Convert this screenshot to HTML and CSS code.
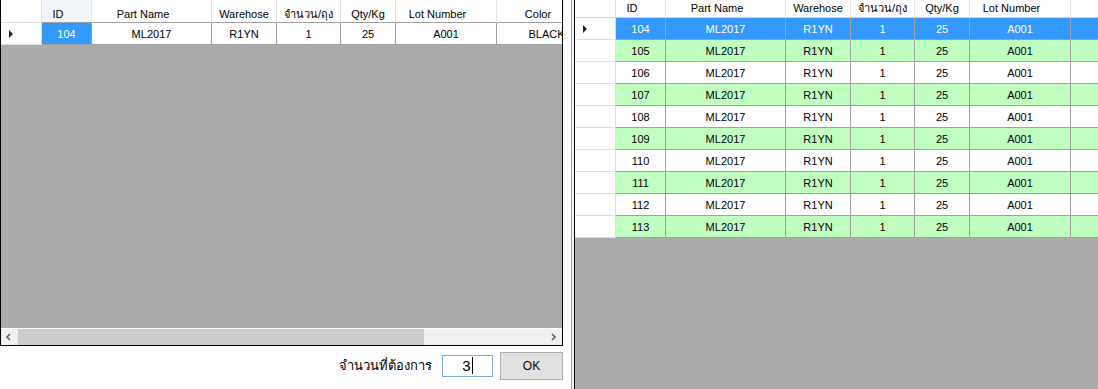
FILE: index.html
```html
<!DOCTYPE html>
<html>
<head>
    <title>Stock Picker</title>
    <link rel="stylesheet" href="styles.css">
</head>
<body>
    <div class="screen">
        <div class="left-pane">
            <div class="grid grid-left">
                <div class="grid-body">
                    <div class="row head">
                        <div class="rh"></div>
                        <div class="c-id sg hover">ID</div>
                        <div class="c-part sg">Part Name</div>
                        <div class="c-wh">Warehose</div>
                        <div class="c-qty">จำนวน/ถุง</div>
                        <div class="c-kg">Qty/Kg</div>
                        <div class="c-lot sg">Lot Number</div>
                        <div class="c-color sg">Color</div>
                    </div>
                    <div class="row">
                        <div class="rh"><span class="arrow"></span></div>
                        <div class="c-id sel">104</div>
                        <div class="c-part">ML2017</div>
                        <div class="c-wh">R1YN</div>
                        <div class="c-qty">1</div>
                        <div class="c-kg">25</div>
                        <div class="c-lot">A001</div>
                        <div class="c-color">BLACK</div>
                    </div>
                </div>
                <div class="hscroll">
                    <div class="sb-btn">
                        <svg width="17" height="16" viewBox="0 0 17 16"><polyline points="9,5 6,8 9,11" fill="none" stroke="#606060" stroke-width="1.6"/></svg>
                    </div>
                    <div class="sb-track"><div class="sb-thumb"></div></div>
                    <div class="sb-btn">
                        <svg width="17" height="16" viewBox="0 0 17 16"><polyline points="7,5 10,8 7,11" fill="none" stroke="#606060" stroke-width="1.6"/></svg>
                    </div>
                </div>
            </div>
            <div class="actions">
                <span class="label">จำนวนที่ต้องการ</span>
                <div class="textbox"><span class="value">3</span></div>
                <button class="btn">OK</button>
            </div>
        </div>
        <div class="splitter"></div>
        <div class="right-pane">
            <div class="grid grid-right">
                <div class="grid-body">
                    <div class="row head cut">
                        <div class="rh"></div>
                        <div class="c-id sg">ID</div>
                        <div class="c-part sg">Part Name</div>
                        <div class="c-wh">Warehose</div>
                        <div class="c-qty">จำนวน/ถุง</div>
                        <div class="c-kg">Qty/Kg</div>
                        <div class="c-lot sg">Lot Number</div>
                        <div class="c-rest"></div>
                    </div>
                    <div class="row sel">
                        <div class="rh"><span class="arrow"></span></div>
                        <div class="c-id">104</div><div class="c-part">ML2017</div><div class="c-wh">R1YN</div><div class="c-qty">1</div><div class="c-kg">25</div><div class="c-lot">A001</div><div class="c-rest"></div>
                    </div>
                    <div class="row alt">
                        <div class="rh"></div>
                        <div class="c-id">105</div><div class="c-part">ML2017</div><div class="c-wh">R1YN</div><div class="c-qty">1</div><div class="c-kg">25</div><div class="c-lot">A001</div><div class="c-rest"></div>
                    </div>
                    <div class="row">
                        <div class="rh"></div>
                        <div class="c-id">106</div><div class="c-part">ML2017</div><div class="c-wh">R1YN</div><div class="c-qty">1</div><div class="c-kg">25</div><div class="c-lot">A001</div><div class="c-rest"></div>
                    </div>
                    <div class="row alt">
                        <div class="rh"></div>
                        <div class="c-id">107</div><div class="c-part">ML2017</div><div class="c-wh">R1YN</div><div class="c-qty">1</div><div class="c-kg">25</div><div class="c-lot">A001</div><div class="c-rest"></div>
                    </div>
                    <div class="row">
                        <div class="rh"></div>
                        <div class="c-id">108</div><div class="c-part">ML2017</div><div class="c-wh">R1YN</div><div class="c-qty">1</div><div class="c-kg">25</div><div class="c-lot">A001</div><div class="c-rest"></div>
                    </div>
                    <div class="row alt">
                        <div class="rh"></div>
                        <div class="c-id">109</div><div class="c-part">ML2017</div><div class="c-wh">R1YN</div><div class="c-qty">1</div><div class="c-kg">25</div><div class="c-lot">A001</div><div class="c-rest"></div>
                    </div>
                    <div class="row">
                        <div class="rh"></div>
                        <div class="c-id">110</div><div class="c-part">ML2017</div><div class="c-wh">R1YN</div><div class="c-qty">1</div><div class="c-kg">25</div><div class="c-lot">A001</div><div class="c-rest"></div>
                    </div>
                    <div class="row alt">
                        <div class="rh"></div>
                        <div class="c-id">111</div><div class="c-part">ML2017</div><div class="c-wh">R1YN</div><div class="c-qty">1</div><div class="c-kg">25</div><div class="c-lot">A001</div><div class="c-rest"></div>
                    </div>
                    <div class="row">
                        <div class="rh"></div>
                        <div class="c-id">112</div><div class="c-part">ML2017</div><div class="c-wh">R1YN</div><div class="c-qty">1</div><div class="c-kg">25</div><div class="c-lot">A001</div><div class="c-rest"></div>
                    </div>
                    <div class="row alt">
                        <div class="rh"></div>
                        <div class="c-id">113</div><div class="c-part">ML2017</div><div class="c-wh">R1YN</div><div class="c-qty">1</div><div class="c-kg">25</div><div class="c-lot">A001</div><div class="c-rest"></div>
                    </div>
                </div>
            </div>
        </div>
    </div>
</body>
</html>
```

FILE: styles.css
```css
html, body {
    margin: 0;
    padding: 0;
    background: #fff;
    font-family: "Liberation Sans", Arial, sans-serif;
    font-size: 11px;
    color: #000;
}

.screen {
    display: flex;
    width: 1098px;
    height: 389px;
    overflow: hidden;
}

.left-pane {
    width: 571px;
    flex: none;
    display: flex;
    flex-direction: column;
}

.splitter {
    width: 3px;
    flex: none;
    box-sizing: border-box;
    border-left: 1px solid #a0a0a0;
    background: #f4f4f4;
}

.right-pane {
    flex: 1;
    min-width: 0;
    display: flex;
}

/* data grid */
.grid {
    display: flex;
    flex-direction: column;
    background: #ababab;
    overflow: hidden;
    box-sizing: border-box;
}

.grid-left {
    width: 563px;
    height: 346px;
    flex: none;
    border: 1px solid #000;
    border-top: 0;
}

.grid-right {
    flex: 1;
    min-width: 0;
    border-left: 1px solid #000;
}

.grid-body {
    flex: 1;
    overflow: hidden;
}

.row {
    display: flex;
    height: 22px;
}

.row > div {
    flex: none;
    box-sizing: border-box;
    height: 100%;
    display: flex;
    align-items: center;
    justify-content: center;
    white-space: nowrap;
    overflow: hidden;
    line-height: 13px;
    padding-top: 1px;
    background: #fff;
    border-right: 1px solid #a0a0a0;
    border-bottom: 1px solid #a0a0a0;
}

.row > .rh {
    width: 41px;
    justify-content: flex-start;
    border-color: #dadee3;
}

.c-id { width: 50px; }
.c-part { width: 120px; }
.c-wh { width: 65px; }
.c-qty { width: 64px; }
.c-kg { width: 55px; }
.c-lot { width: 101px; }
.c-color { width: 100px; }
.row > .c-rest { flex: 1; border-right: 0; }

.head {
    height: 23px;
}

.head > div {
    padding-top: 6px;
    border-right-color: #e5e5e5;
}

.head > .sg {
    padding-right: 17px;
}

.head > .hover {
    background: #f2f6fb;
}

.head.cut {
    height: 18px;
}

.head.cut > div {
    align-items: flex-end;
    padding-top: 0;
    padding-bottom: 2px;
    border-bottom-color: #d0d0d0;
}

.row > .sel,
.row.sel > div:not(.rh) {
    background: #3399ff;
    color: #fff;
}

.row.alt > div:not(.rh) {
    background: #c0ffc0;
}

.arrow {
    width: 0;
    height: 0;
    margin-left: 8px;
    border-left: 4px solid #222;
    border-top: 4px solid transparent;
    border-bottom: 4px solid transparent;
}

/* horizontal scrollbar */
.hscroll {
    height: 17px;
    flex: none;
    display: flex;
    box-sizing: border-box;
    border-top: 1px solid #fff;
    background: #f0f0f0;
}

.sb-btn {
    width: 17px;
    flex: none;
    display: flex;
    align-items: center;
}

.sb-track {
    flex: 1;
    display: flex;
}

.sb-thumb {
    width: 406px;
    background: #cdcdcd;
}

/* bottom controls */
.actions {
    flex: 1;
    display: flex;
    align-items: center;
    justify-content: flex-end;
    padding: 0 8px 4px 0;
}

.label {
    font-size: 13px;
    margin-right: 10px;
}

.textbox {
    width: 51px;
    height: 22px;
    box-sizing: border-box;
    border: 1px solid #7aaee6;
    display: flex;
    align-items: center;
    justify-content: center;
    font-size: 15px;
    margin-right: 7px;
}

.value {
    border-right: 1px solid #000;
    padding-right: 1px;
    line-height: 17px;
}

.btn {
    width: 63px;
    height: 28px;
    box-sizing: border-box;
    border: 1px solid #adadad;
    background: #e1e1e1;
    font-family: "Liberation Sans", Arial, sans-serif;
    font-size: 12px;
    color: #000;
    padding: 0;
}
```
